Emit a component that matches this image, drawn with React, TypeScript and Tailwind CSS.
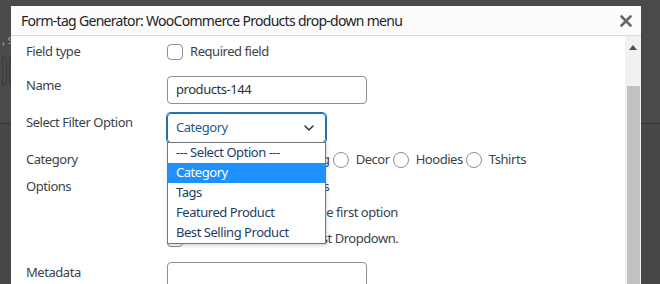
import { ChevronDown } from 'lucide-react';

const font = { fontFamily: '"Noto Sans", "Open Sans", sans-serif' };

function Checkbox() {
  return <span className="inline-block w-4 h-4 rounded-[4px] border border-[#8c8f94] bg-white shrink-0" />;
}

function Radio() {
  return <span className="inline-block w-4 h-4 rounded-full border border-[#8c8f94] bg-white shrink-0" />;
}

export default function App() {
  const options = ['--- Select Option ---', 'Category', 'Tags', 'Featured Product', 'Best Selling Product'];
  const cats = ['Accessories', 'Clothing', 'Decor', 'Hoodies', 'Tshirts'];

  return (
    <div className="relative w-[660px] h-[284px] overflow-hidden bg-[#474747] text-[13px] tracking-[-0.035em]" style={font}>
      {/* page behind the overlay */}
      <div className="h-[124px] border-b border-[#353535] bg-[#4a4a4a] px-[2px] pt-[34px]">
        <div className="text-[#9a9a9a] text-[12px] leading-none">, s</div>
        <div className="mt-[10px] flex gap-[2px]">
          <span className="block w-[5px] h-[30px] border border-[#3a3a3a] rounded-r" />
          <span className="block w-[6px] h-[30px] border border-[#3a3a3a] rounded-l" />
        </div>
      </div>

      {/* modal */}
      <div className="absolute left-[11px] top-[6px] w-[630px] h-[290px] bg-white flex flex-col">
        <div className="h-[30px] shrink-0 bg-[#fcfcfc] border-b border-[#dcdcde] flex items-center justify-between pl-[10px] pr-[9px]">
          <span className="text-[14px] tracking-[-0.05em] text-[#1d2327]">Form-tag Generator: WooCommerce Products drop-down menu</span>
          <svg width="12" height="12" viewBox="0 0 12 12" className="text-[#646970]">
            <path d="M1.5 1.5 L10.5 10.5 M10.5 1.5 L1.5 10.5" stroke="currentColor" strokeWidth="2.6" strokeLinecap="round" />
          </svg>
        </div>

        <div className="flex flex-1 min-h-0">
          <div className="relative flex-1 pl-[15px] text-[#3c434a]">
            {/* Field type */}
            <div className="flex items-center mt-[7px] h-[18px]">
              <div className="w-[141px]">Field type</div>
              <Checkbox />
              <span className="ml-[7px]">Required field</span>
            </div>

            {/* Name */}
            <div className="flex items-start mt-[15px]">
              <div className="w-[141px]">Name</div>
              <div className="w-[200px] h-[28px] rounded-[4px] border border-[#8c8f94] px-[8px] flex items-center text-[#2c3338]">
                products-144
              </div>
            </div>

            {/* Select filter */}
            <div className="flex items-start mt-[9px]">
              <div className="w-[141px]">Select Filter Option</div>
              <div className="w-[159px] h-[30px] rounded-[4px] border border-[#2271b1] px-[8px] flex items-center justify-between text-[#1f5a8e] shadow-[0_0_0_1px_#2271b1]">
                <span>Category</span>
                <ChevronDown className="w-4 h-4 text-[#2c3338]" strokeWidth={2.2} />
              </div>
            </div>

            {/* Category */}
            <div className="flex items-center mt-[8px] h-[18px]">
              <div className="w-[141px]">Category</div>
              <div className="flex items-center">
                {cats.map((c, i) => (
                  <span key={c} className={'flex items-center ' + (i > 0 ? 'ml-[3px]' : '')}>
                    <Radio />
                    <span className="ml-[7px]">{c}</span>
                  </span>
                ))}
              </div>
            </div>

            {/* Options */}
            <div className="flex items-start mt-[8px]">
              <div className="w-[141px]">Options</div>
              <div className="flex flex-col gap-[8px] pt-[1px]">
                <label className="flex items-center gap-[7px] h-[18px]"><Checkbox />Allow multiple selections</label>
                <label className="flex items-center gap-[7px] h-[18px]"><Checkbox />Insert a blank item as the first option</label>
                <label className="flex items-center gap-[7px] h-[18px]"><Checkbox />Enable Search box on 1st Dropdown.</label>
              </div>
            </div>

            {/* Metadata */}
            <div className="flex items-start mt-[14px]">
              <div className="w-[141px] pt-[1px]">Metadata</div>
              <div className="w-[200px] h-[28px] rounded-[4px] border border-[#8c8f94]" />
            </div>

            {/* open dropdown list */}
            <div className="absolute left-[156px] top-[106px] w-[159px] border border-[#767676] bg-white shadow-[1px_2px_3px_rgba(0,0,0,0.15)]">
              {options.map((o, i) => (
                <div
                  key={o}
                  className={
                    'h-[20px] px-[8px] flex items-center ' +
                    (i === 1 ? 'bg-[#1e90ff] text-white' : 'text-[#1e3e64]')
                  }
                >
                  {o}
                </div>
              ))}
            </div>
          </div>

          {/* scrollbar */}
          <div className="w-[16px] shrink-0 bg-[#f1f1f1] flex flex-col items-center">
            <svg width="8" height="5" viewBox="0 0 8 5" className="mt-[9px]">
              <path d="M0 5 L4 0 L8 5 Z" fill="#505050" />
            </svg>
            <div className="mt-[36px] w-[13px] flex-1 bg-[#c1c1c1]" />
          </div>
        </div>
      </div>
    </div>
  );
}
